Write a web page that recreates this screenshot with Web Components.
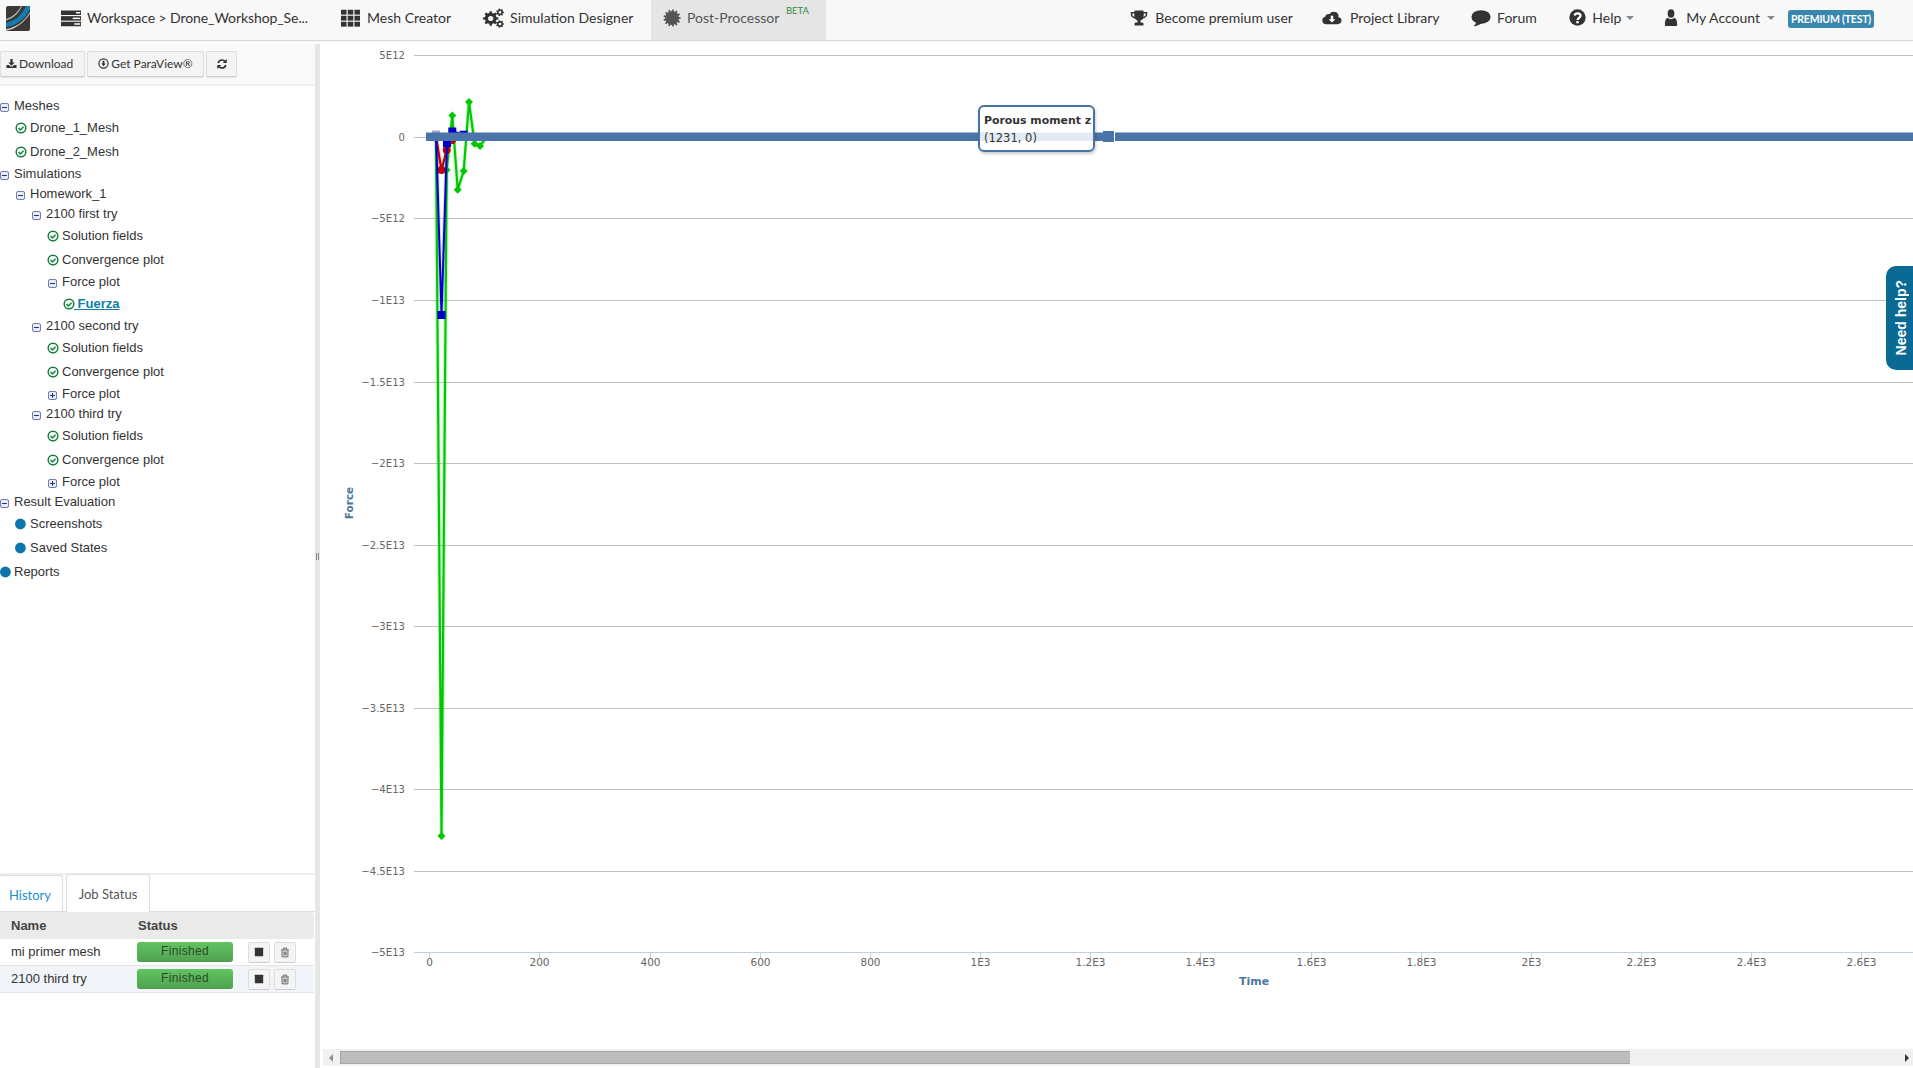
<!DOCTYPE html>
<html>
<head>
<meta charset="utf-8">
<title>Post-Processor</title>
<style>
    html, body { margin: 0; height: 100%; background: #fff; overflow: hidden; }
</style>
</head>
<body>
<app-shell>
    <top-nav slot="nav"></top-nav>
    <side-panel slot="side">
        <tree-row kind="minus">Meshes</tree-row>
        <tree-row level="1" kind="ok">Drone_1_Mesh</tree-row>
        <tree-row level="1" kind="ok">Drone_2_Mesh</tree-row>
        <tree-row kind="minus">Simulations</tree-row>
        <tree-row level="1" kind="minus">Homework_1</tree-row>
        <tree-row level="2" kind="minus">2100 first try</tree-row>
        <tree-row level="3" kind="ok">Solution fields</tree-row>
        <tree-row level="3" kind="ok">Convergence plot</tree-row>
        <tree-row level="3" kind="minus">Force plot</tree-row>
        <tree-row level="4" kind="ok" active>&nbsp;Fuerza</tree-row>
        <tree-row level="2" kind="minus">2100 second try</tree-row>
        <tree-row level="3" kind="ok">Solution fields</tree-row>
        <tree-row level="3" kind="ok">Convergence plot</tree-row>
        <tree-row level="3" kind="plus">Force plot</tree-row>
        <tree-row level="2" kind="minus">2100 third try</tree-row>
        <tree-row level="3" kind="ok">Solution fields</tree-row>
        <tree-row level="3" kind="ok">Convergence plot</tree-row>
        <tree-row level="3" kind="plus">Force plot</tree-row>
        <tree-row kind="minus">Result Evaluation</tree-row>
        <tree-row level="1" kind="dot">Screenshots</tree-row>
        <tree-row level="1" kind="dot">Saved States</tree-row>
        <tree-row kind="dot">Reports</tree-row>
        <job-panel slot="jobs">
            <job-row>mi primer mesh</job-row>
            <job-row alt>2100 third try</job-row>
        </job-panel>
    </side-panel>
    <force-chart slot="main"></force-chart>
</app-shell>
<help-tab>Need help?</help-tab>

<script>
function gear(cx, cy, r, teeth, hole) {
    let d = ''
    const step = Math.PI * 2 / teeth
    for (let i = 0; i < teeth; i++) {
        const a = i * step
        const pts = [[a - step * .32, r * .76], [a - step * .18, r], [a + step * .18, r], [a + step * .32, r * .76]]
        pts.forEach(p => {
            d += (d ? 'L' : 'M') + (cx + Math.cos(p[0]) * p[1]).toFixed(2) + ' ' + (cy + Math.sin(p[0]) * p[1]).toFixed(2)
        })
    }
    d += 'Z'
    if (hole) d += `M${cx - hole} ${cy}a${hole} ${hole} 0 1 0 ${hole * 2} 0a${hole} ${hole} 0 1 0 ${-hole * 2} 0Z`
    return d
}

const ICONS = {
    server: `<rect x="0" y="2" width="24" height="6" fill="currentColor"/><rect x="0" y="9.500" width="24" height="6" fill="currentColor"/><rect x="0" y="17" width="24" height="6" fill="currentColor"/><rect x="18" y="4" width="5" height="2" fill="#fff"/><rect x="14" y="11.500" width="9" height="2" fill="#fff"/><rect x="16" y="19" width="7" height="2" fill="#fff"/>`,
    grid: [1, 9, 17].map(y => [0, 8.5, 17].map(x => `<rect x="${x}" y="${y}" width="7" height="6.500" fill="currentColor"/>`).join('')).join(''),
    cogs: `<path fill-rule="evenodd" fill="currentColor" d="${gear(8.8, 12.5, 8.8, 8, 3)}"/><path fill-rule="evenodd" fill="currentColor" d="${gear(19.4, 5.2, 4.6, 7, 1.6)}"/><path fill-rule="evenodd" fill="currentColor" d="${gear(19.4, 19.2, 4.6, 7, 1.6)}"/>`,
    post: `<path fill="#555" d="${gear(12, 12, 11.5, 13, 0)}"/><circle cx="12" cy="12" r="9" fill="#555"/>`,
    trophy: `<path fill="currentColor" fill-rule="evenodd" d="M6 2h12v2h5v3c0 3-2.400 5.200-5.600 5.600-.8 1.400-2 2.300-3.400 2.600V18h2.500c1 0 1.500 1 1.500 2v2H6v-2c0-1 .5-2 1.500-2H10v-2.800c-1.400-.3-2.600-1.200-3.400-2.600C3.400 12.200 1 10 1 7V4h5zM3 6v1c0 1.600 1.100 3 3 3.400-.3-1.300-.4-2.900-.4-4.400zM21 6h-2.600c0 1.500-.1 3.100-.4 4.400 1.900-.4 3-1.800 3-3.400z"/>`,
    cloud: `<path fill="currentColor" d="M19.500 10.500A5.500 5.500 0 0 0 9.200 6.800 3.800 3.800 0 0 0 4 10.400 5 5 0 0 0 5.500 20.200h13a4.900 4.900 0 0 0 1-9.700z"/><path fill="#fff" d="M10.500 9h3v4.500H16L12 18l-4-4.500h2.500z"/>`,
    comment: `<ellipse cx="12" cy="10.500" rx="11.500" ry="9" fill="currentColor"/><path fill="currentColor" d="M6 16c.4 3-.8 5-3 7 4-.5 7.500-2.200 10-4.500z"/>`,
    help: `<circle cx="12" cy="12" r="11.500" fill="currentColor"/><path fill="none" stroke="#fff" stroke-width="3.200" d="M7.800 9.200c.6-2 2.200-3 4.300-3 2.400 0 4.200 1.400 4.200 3.500 0 2.800-4.200 2.900-4.200 5.800"/><rect x="10.300" y="17" width="3.400" height="3.200" fill="#fff"/>`,
    user: `<ellipse cx="12" cy="6.500" rx="5.800" ry="6" fill="currentColor"/><path fill="currentColor" d="M3 24c-1 0-1.500-.6-1.500-1.800 0-5 1-8.700 5-9.700 1.400 1.200 3.300 1.900 5.500 1.900s4.100-.7 5.500-1.900c4 1 5 4.700 5 9.700 0 1.200-.5 1.800-1.500 1.800z"/>`,
    download: `<path fill="currentColor" d="M9.500 2h5v8h4.500l-7 7-7-7h4.500z"/><path fill="currentColor" d="M1 15h6l2.500 3.500h5L17 15h6v7H1z"/>`,
    circledown: `<circle cx="12" cy="12" r="10" fill="none" stroke="currentColor" stroke-width="2.600"/><path fill="currentColor" d="M10 6h4v6h3l-5 6-5-6h3z"/>`,
    refresh: `<path fill="none" stroke="currentColor" stroke-width="3.400" d="M4.500 10C5.500 6.200 8.500 4 12 4c2.400 0 4.500 1 6 2.800"/><path fill="currentColor" d="M21.500 2v8h-8z"/><path fill="none" stroke="currentColor" stroke-width="3.400" d="M19.500 14c-1 3.800-4 6-7.500 6-2.400 0-4.500-1-6-2.800"/><path fill="currentColor" d="M2.500 22v-8h8z"/>`,
    stop: `<rect x="2" y="2" width="20" height="20" rx="1" fill="currentColor"/>`,
    trash: `<path fill="none" stroke="currentColor" stroke-width="2" d="M5 7v14.500h14V7M2.500 6.500h19M8 6V2.500h8V6M9.500 10v8.500M12 10v8.500M14.500 10v8.500"/>`
}

class UiIcon extends HTMLElement {
    constructor() {
        super()
        this.root = this.attachShadow({mode: 'open'})
    }
    connectedCallback() {
        const w = this.getAttribute('w') || 16
        const h = this.getAttribute('h') || w
        this.root.innerHTML = `
            <style>
                :host { display: inline-flex; flex: none; color: inherit; }
                svg { display: block; }
            </style>
            <svg width="${w}" height="${h}" viewBox="0 0 24 24" preserveAspectRatio="none">${ICONS[this.getAttribute('name')]}</svg>`
    }
}
customElements.define('ui-icon', UiIcon)

class AppShell extends HTMLElement {
    constructor() {
        super()
        this.attachShadow({mode: 'open'}).innerHTML = `
            <style>
                :host { display: grid; grid-template-columns: 315px 5px 1fr; grid-template-rows: 41px 3px 1fr; height: 1068px; width: 1913px; }
                ::slotted([slot=nav]) { grid-column: 1 / 4; grid-row: 1; }
                ::slotted([slot=side]) { grid-column: 1; grid-row: 3; min-height: 0; }
                ::slotted([slot=main]) { grid-column: 3; grid-row: 2 / 4; min-height: 0; min-width: 0; }
                .splitter { grid-column: 2; grid-row: 3; background: #e6e6e6; display: flex; align-items: center; justify-content: center; gap: 1px; }
                .splitter i { width: 1px; height: 7px; background: #888; }
            </style>
            <slot name="nav"></slot>
            <slot name="side"></slot>
            <div class="splitter"><i></i><i></i></div>
            <slot name="main"></slot>`
    }
}
customElements.define('app-shell', AppShell)

class NavItem extends HTMLElement {
    constructor() {
        super()
        this.attachShadow({mode: 'open'}).innerHTML = `
            <style>
                :host { display: flex; align-items: center; gap: var(--gap, 6px); height: 40px; box-sizing: border-box; padding-bottom: 5px; color: #333; white-space: nowrap; }
                :host([caret])::after { content: ""; border: 4.500px solid transparent; border-top-color: #888; border-bottom: 0; margin-left: -1px; }
                :host([active]) { background: #e5e5e5; color: #555; }
            </style>
            <slot name="icon"></slot><slot></slot>`
    }
}
customElements.define('nav-item', NavItem)

class TopNav extends HTMLElement {
    constructor() {
        super()
        this.attachShadow({mode: 'open'}).innerHTML = `
            <style>
                :host { display: flex; align-items: stretch; height: 40px; background: #f8f8f8; border-bottom: 1px solid #d9d9d9; font: 14px Lato, sans-serif; color: #333; box-shadow: 0 1px 2px rgba(0,0,0,.04); position: relative; z-index: 2; }
                .logo { margin: 6px 31px 0 6px; width: 24px; height: 25px; flex: none; }
                .spacer { flex: 1; }
                sup { font-size: 9.500px; color: #2e8b3d; line-height: 10px; }
                .badge { align-self: flex-start; margin: 10px 39px 0 13px; background: #3a87ad; color: #fff; font: bold 10.500px/18px Lato, sans-serif; letter-spacing: -.2px; border-radius: 3px; width: 86px; text-align: center; white-space: nowrap; }
            </style>
            <svg class="logo" viewBox="0 0 24 25">
                <rect width="24" height="25" rx="2" fill="#3c3835"/>
                <path d="M0 17C9 15 16 9 20 0h4v3C19 13 10 20 0 21z" fill="#0d7fb3"/>
                <path d="M0 23C9 22 18 16 24 6v1.600C18 17 9 23.500 1 24.500z" fill="#cfcfcf"/>
                <path d="M0 13C7 11 12 6 15 0h1C13 7 7 12.500 0 14.500z" fill="#bbb"/>
            </svg>
            <nav-item style="letter-spacing:-.08px"><ui-icon slot="icon" name="server" w="20" h="18"></ui-icon>Workspace &gt; Drone_Workshop_Se...</nav-item>
            <nav-item style="margin-left:33px;--gap:7px"><ui-icon slot="icon" name="grid" w="19" h="18"></ui-icon>Mesh Creator</nav-item>
            <nav-item style="margin-left:32px"><ui-icon slot="icon" name="cogs" w="21" h="20"></ui-icon>Simulation Designer</nav-item>
            <nav-item active style="margin-left:17.500px;padding:0 47px 5px 12px;position:relative"><ui-icon slot="icon" name="post" w="18" h="18"></ui-icon>Post-Processor<sup style="position:absolute;left:135px;top:6px">BETA</sup></nav-item>
            <div class="spacer"></div>
            <nav-item style="--gap:7px"><ui-icon slot="icon" name="trophy" w="18" h="18"></ui-icon>Become premium user</nav-item>
            <nav-item style="margin-left:29px;--gap:8px"><ui-icon slot="icon" name="cloud" w="20" h="18"></ui-icon>Project Library</nav-item>
            <nav-item style="margin-left:31.500px"><ui-icon slot="icon" name="comment" w="20" h="18"></ui-icon>Forum</nav-item>
            <nav-item caret style="margin-left:32.500px;--gap:6px"><ui-icon slot="icon" name="help" w="17" h="17"></ui-icon>Help</nav-item>
            <nav-item caret style="margin-left:30px;--gap:8px"><ui-icon slot="icon" name="user" w="14" h="17"></ui-icon>My Account</nav-item>
            <div class="badge">PREMIUM (TEST)</div>`
    }
}
customElements.define('top-nav', TopNav)

class ToolButton extends HTMLElement {
    constructor() {
        super()
        this.attachShadow({mode: 'open'}).innerHTML = `
            <style>
                :host { display: inline-flex; align-items: center; justify-content: center; gap: 2px; box-sizing: border-box; height: 26px; padding-bottom: 1px; background: #f4f4f4; border: 1px solid #ddd; border-bottom-color: #ccc; border-radius: 2px; font: 12px Lato, sans-serif; color: #333; white-space: nowrap; box-shadow: 0 1px 1px rgba(0,0,0,.08); }
            </style>
            <slot></slot>`
    }
}
customElements.define('tool-button', ToolButton)

class TreeRow extends HTMLElement {
    constructor() {
        super()
        this.root = this.attachShadow({mode: 'open'})
    }
    connectedCallback() {
        const kind = this.getAttribute('kind')
        const level = +this.getAttribute('level') || 0
        const round = kind === 'ok' || kind === 'dot'
        let mark = ''
        if (kind === 'ok') {
            mark = `<svg width="12" height="12" viewBox="0 0 12 12"><circle cx="6" cy="6" r="4.800" fill="#fff" stroke="#13803a" stroke-width="1.500"/><path d="M3.500 6l2 2 3-3.200" fill="none" stroke="#13803a" stroke-width="1.500"/></svg>`
        } else if (kind === 'dot') {
            mark = `<svg width="12" height="12" viewBox="0 0 12 12"><circle cx="5.400" cy="6" r="5.400" fill="#0b76ac"/></svg>`
        } else {
            mark = `<svg width="9" height="9" viewBox="0 0 9 9" style="margin-top:3px"><rect x=".5" y=".5" width="8" height="8" rx="1.500" fill="#e9ebf6" stroke="#6f7cb4"/><path d="M2 4.500h5${kind === 'plus' ? 'M4.500 2v5' : ''}" stroke="#2d3566"/></svg>`
        }
        this.root.innerHTML = `
            <style>
                :host { display: flex; align-items: center; height: ${round ? 24 : 20}px; padding-left: ${level * 16 - (round && level ? 1 : 0)}px; font: 13px "Liberation Sans", Arial, sans-serif; color: #333; white-space: nowrap; }
                .mark { width: ${round && level ? 15 : 14}px; flex: none; display: flex; }
                :host([active]) .label { color: #0b7fab; font-weight: bold; text-decoration: underline; margin-left: -4px; }
            </style>
            <span class="mark">${mark}</span><span class="label"><slot></slot></span>`
    }
}
customElements.define('tree-row', TreeRow)

class SidePanel extends HTMLElement {
    constructor() {
        super()
        this.attachShadow({mode: 'open'}).innerHTML = `
            <style>
                :host { display: flex; flex-direction: column; background: #fff; overflow: hidden; }
                .tools { display: flex; gap: 2px; align-items: flex-start; box-sizing: border-box; height: 42px; padding-top: 7px; background: #f9f9f9; border-bottom: 2px solid #eee; flex: none; }
                .tree { flex: 1; padding-top: 9.500px; min-height: 0; }
            </style>
            <div class="tools">
                <tool-button style="width:85px;justify-content:flex-start;padding-left:5px"><ui-icon name="download" w="11" h="11"></ui-icon>Download</tool-button>
                <tool-button style="width:117px"><ui-icon name="circledown" w="11" h="11"></ui-icon>Get ParaView®</tool-button>
                <tool-button style="width:31px"><ui-icon name="refresh" w="12" h="12"></ui-icon></tool-button>
            </div>
            <div class="tree"><slot></slot></div>
            <slot name="jobs"></slot>`
    }
}
customElements.define('side-panel', SidePanel)

class JobPanel extends HTMLElement {
    constructor() {
        super()
        this.attachShadow({mode: 'open'}).innerHTML = `
            <style>
                :host { display: block; flex: none; height: 195px; box-sizing: border-box; border-top: 2px solid #eee; }
                .tabs { display: flex; gap: 3px; height: 37px; box-sizing: border-box; border-bottom: 1px solid #ddd; font: 13px Lato, sans-serif; align-items: flex-end; }
                .tab { box-sizing: border-box; line-height: 38px; border: 1px solid #ddd; border-bottom: 0; border-radius: 3px 3px 0 0; text-align: center; }
                .history { width: 64px; margin-left: -1px; padding-right: 2px; color: #1d8fc9; height: 36px; }
                .jobs { width: 84px; color: #555; background: #fff; margin-bottom: -1px; height: 38px; }
                .head { display: flex; height: 27px; align-items: center; background: #eaeaea; border-radius: 0 3px 3px 0; font: bold 13px "Liberation Sans", Arial, sans-serif; color: #444; width: 314px; }
                .head span:first-child { width: 127px; padding-left: 11px; }
            </style>
            <div class="tabs"><div class="tab history">History</div><div class="tab jobs">Job Status</div></div>
            <div class="head"><span>Name</span><span>Status</span></div>
            <slot></slot>`
    }
}
customElements.define('job-panel', JobPanel)

class JobRow extends HTMLElement {
    constructor() {
        super()
        this.attachShadow({mode: 'open'}).innerHTML = `
            <style>
                :host { display: flex; align-items: center; height: 27px; width: 314px; box-sizing: border-box; border-bottom: 1px solid #e4e4e4; font: 13px "Liberation Sans", Arial, sans-serif; color: #333; }
                :host([alt]) { background: #f1f5fa; }
                .name { width: 126px; padding-left: 11px; flex: none; margin-top: -1px; }
                .pill { width: 96px; height: 20px; flex: none; border-radius: 3px; background: linear-gradient(#62c462, #51a351); border-bottom: 1px solid #4a964a; box-sizing: border-box; text-align: center; font-size: 12px; line-height: 19px; color: #2c4a2c; letter-spacing: .3px; }
                .btn { width: 22px; height: 21px; flex: none; box-sizing: border-box; background: #f4f4f4; border: 1px solid #ddd; border-bottom-color: #ccc; border-radius: 2px; display: flex; align-items: center; justify-content: center; color: #333; }
                .btn.first { margin-left: 15px; margin-right: 4px; }
                .btn.trash { color: #555; }
            </style>
            <span class="name"><slot></slot></span>
            <div class="pill">Finished</div>
            <div class="btn first"><ui-icon name="stop" w="10" h="10"></ui-icon></div>
            <div class="btn trash"><ui-icon name="trash" w="10" h="11"></ui-icon></div>`
    }
}
customElements.define('job-row', JobRow)

class ForceChart extends HTMLElement {
    constructor() {
        super()
        this.attachShadow({mode: 'open'}).innerHTML = `
            <style>
                :host { display: flex; flex-direction: column; position: relative; background: #fff; }
                svg { display: block; flex: none; }
                text { font: 10.500px "DejaVu Sans", Verdana, sans-serif; fill: #666; }
                text.ylabel { font-size: 10.100px; }
                text.title { font-weight: bold; fill: #4d759e; font-size: 11px; }
                .bar { flex: none; height: 17px; margin-left: 3px; background: #f1f1f1; position: relative; display: flex; align-items: center; justify-content: space-between; padding: 0 4px 0 6px; }
                .thumb { position: absolute; left: 17px; width: 1290px; height: 13px; top: 2px; background: #bcbcbc; border: 1px solid #a6a6a6; box-sizing: border-box; border-right-width: 0; }
                .arrow { width: 0; height: 0; border: 4.500px solid transparent; }
                .arrow.l { border-right-color: #8f8f8f; border-left: 0; }
                .arrow.r { border-left-color: #333; border-right: 0; }
                .tip { position: absolute; left: 658px; top: 64px; width: 117px; height: 47px; box-sizing: border-box; background: rgba(255,255,255,.85); border: 2px solid #4572a7; border-radius: 6px; box-shadow: 1px 2px 3px rgba(0,0,0,.2); padding: 5px 0 0 4px; font: 11.500px/18px "DejaVu Sans", Verdana, sans-serif; color: #333; white-space: nowrap; }
                .tip b { display: block; line-height: 17px; font-size: 10.900px; }
            </style>
            ${this.plot()}
            <div class="tip"><b>Porous moment z</b>(1231, 0)</div>
            <div class="bar"><i class="arrow l"></i><div class="thumb"></div><i class="arrow r"></i></div>`
    }

    plot() {
        const yOf = i => 55.3 + i * 81.55
        const xOf = v => 429.3 + v * 0.5508
        const yLabels = ['5E12', '0', '−5E12', '−1E13', '−1.5E13', '−2E13', '−2.5E13', '−3E13', '−3.5E13', '−4E13', '−4.5E13', '−5E13']
        const xLabels = ['0', '200', '400', '600', '800', '1E3', '1.2E3', '1.4E3', '1.6E3', '1.8E3', '2E3', '2.2E3', '2.4E3', '2.6E3']
        let grid = ''
        yLabels.forEach((t, i) => {
            const y = Math.round(yOf(i)) + .5
            const last = i === yLabels.length - 1
            grid += `<path d="M414 ${y}H1913" stroke="${last ? '#c0d0e0' : '#c0c0c0'}"/>`
            grid += `<text class="ylabel" x="405" y="${y + 3.500}" text-anchor="end">${t}</text>`
        })
        xLabels.forEach((t, i) => {
            const x = Math.round(xOf(i * 200)) + .5
            grid += `<path d="M${x} 952V958" stroke="#c0d0e0"/>`
            grid += `<text x="${x}" y="966" text-anchor="middle">${t}</text>`
        })
        const green = [[436, 137], [441.500, 836], [446.700, 170], [452.300, 115.500], [457.700, 189.700], [463.700, 171], [469, 102], [474.600, 143.700], [480, 146], [484.500, 140]]
        const blue = [[436, 132], [441.500, 315], [447, 143], [452.300, 131.500], [463.700, 134.700], [470, 137]]
        const red = [[436, 137], [441.500, 170], [446.700, 150], [452, 140], [458, 137]]
        const line = (pts, color, w) => `<polyline points="${pts.join(' ')}" fill="none" stroke="${color}" stroke-width="${w}"/>`
        const series = line(green, 'rgba(0,200,0,.18)', 4.5) + line(green, '#00c800', 2.2)
            + green.slice(1, 9).map(p => `<path d="M${p[0]} ${p[1] - 4}l4 4-4 4-4-4z" fill="#00c800"/>`).join('')
            + line(red, 'rgba(192,0,0,.15)', 4.5) + line(red, '#c00000', 2.2)
            + red.slice(1, 4).map(p => `<circle cx="${p[0]}" cy="${p[1]}" r="4" fill="#c00000"/>`).join('')
            + line(blue, 'rgba(0,0,200,.15)', 4) + line(blue, '#0000c8', 2)
            + blue.slice(1, 5).map(p => `<rect x="${p[0] - 4}" y="${p[1] - 4}" width="8" height="8" fill="#0000c8"/>`).join('')
        return `<svg width="1593" height="1008" viewBox="320 41 1593 1008">
            ${grid}
            ${series}
            <rect x="432" y="130.500" width="8" height="3" fill="#a3a3d6"/>
            <rect x="426" y="132.500" width="1487" height="8.500" fill="#4a74a8"/>
            <rect x="1103" y="131" width="11" height="11" fill="#4a74a8"/>
            <rect x="1114" y="132" width="1" height="9" fill="#fff"/>
            <text class="title" x="1254" y="985" text-anchor="middle">Time</text>
            <text class="title" x="353" y="503" text-anchor="middle" transform="rotate(-90 353 503)" style="font-size:10.500px">Force</text>
        </svg>`
    }
}
customElements.define('force-chart', ForceChart)

class HelpTab extends HTMLElement {
    constructor() {
        super()
        this.attachShadow({mode: 'open'}).innerHTML = `
            <style>
                :host { position: absolute; right: 0; top: 266px; width: 27px; height: 104px; box-sizing: border-box; padding-left: 3px; background: #0a6a94; border-radius: 10px 0 0 10px; color: #fff; font: bold 14px "Liberation Sans", Arial, sans-serif; display: flex; align-items: center; justify-content: center; }
                span { writing-mode: vertical-rl; transform: rotate(180deg); white-space: nowrap; }
            </style>
            <span><slot></slot></span>`
    }
}
customElements.define('help-tab', HelpTab)
</script>
</body>
</html>
